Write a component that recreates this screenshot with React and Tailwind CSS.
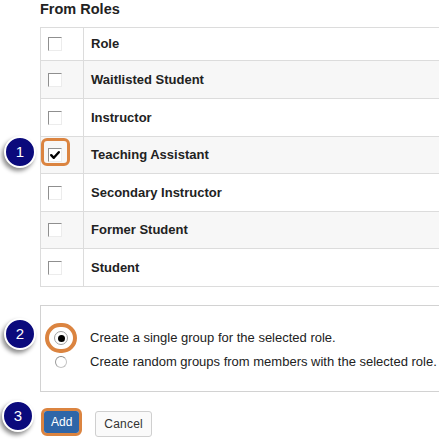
import React from "react";

function Badge({ n, className }) {
  return (
    <div
      className={
        "absolute w-[32px] h-[32px] rounded-full bg-[#0b0a7c] border-2 border-white flex items-center justify-center text-white text-[15px] shadow-[-2px_3px_4px_rgba(0,0,0,0.45)] " +
        className
      }
    >
      {n}
    </div>
  );
}

function Checkbox({ checked }) {
  return (
    <div className="relative w-[14px] h-[14px] bg-white border-t border-l border-[#8f8f8f] border-r border-b border-r-[#ececec] border-b-[#ececec]">
      {checked && (
        <svg viewBox="0 0 14 14" className="absolute left-[-1px] top-[-1px] w-[14px] h-[14px]">
          <path d="M3.2 7.2 L5.8 9.8 L10.8 4.2" fill="none" stroke="#000" strokeWidth="2.4" strokeLinecap="round" strokeLinejoin="round" />
        </svg>
      )}
    </div>
  );
}

const rows = [
  { label: "Role", h: "h-[32px]", bg: "bg-white" },
  { label: "Waitlisted Student", h: "h-[37px]", bg: "bg-[#f7f7f7]" },
  { label: "Instructor", h: "h-[37px]", bg: "bg-white" },
  { label: "Teaching Assistant", h: "h-[36px]", bg: "bg-[#f7f7f7]", checked: true },
  { label: "Secondary Instructor", h: "h-[37px]", bg: "bg-white" },
  { label: "Former Student", h: "h-[36px]", bg: "bg-[#f7f7f7]" },
  { label: "Student", h: "h-[37px]", bg: "bg-white" },
];

export default function App() {
  return (
    <div
      className="relative w-[439px] h-[440px] overflow-hidden bg-white text-[#222]"
      style={{ fontFamily: '"Liberation Sans", Arial, sans-serif' }}
    >
      <div className="pl-[40px] pt-[1px] w-[480px]">
        <div className="text-[14.5px] leading-[16px] font-bold text-[#222]">From Roles</div>

        <div className="mt-[10px] border-t border-l border-[#dcdcdc]">
          {rows.map((r) => (
            <div key={r.label} className={"flex border-b border-[#dcdcdc] " + r.bg}>
              <div className={"w-[43px] shrink-0 flex items-center pl-[7px] border-r border-[#dcdcdc] " + r.h}>
                {r.checked ? (
                  <div className="relative">
                    <div className="absolute left-[-7px] top-[-10px] w-[29px] h-[28px] rounded-[6px] border-[3px] border-[#db8440]"></div>
                    <Checkbox checked />
                  </div>
                ) : (
                  <Checkbox />
                )}
              </div>
              <div className={"flex items-center pl-[7px] text-[13px] font-bold text-[#222] " + r.h}>{r.label}</div>
            </div>
          ))}
        </div>

        <div className="mt-[18px] border-t border-l border-b border-[#d2d2d2] pt-[20px] pb-[17px] pl-[14px] text-[13px] text-[#222]">
          <div className="flex items-center h-[24px]">
            <div className="relative w-[12px] flex justify-center mr-[23px]">
              <div className="absolute left-1/2 top-1/2 -translate-x-1/2 -translate-y-1/2 w-[32px] h-[30px] rounded-full border-[4px] border-[#db8440]"></div>
              <div className="w-[14px] h-[14px] rounded-full border border-[#a0a0a0] bg-white flex items-center justify-center shrink-0">
                <div className="w-[7px] h-[7px] rounded-full bg-black"></div>
              </div>
            </div>
            <span>Create a single group for the selected role.</span>
          </div>
          <div className="flex items-center h-[24px]">
            <div className="w-[12px] flex justify-center mr-[23px]">
              <div className="w-[12px] h-[12px] rounded-full border border-[#c4c4c4] border-t-[#8a8a8a] border-l-[#9a9a9a] bg-white shrink-0"></div>
            </div>
            <span>Create random groups from members with the selected role.</span>
          </div>
        </div>

        <div className="flex items-center mt-[15px] pl-[1px]">
          <div className="rounded-[6px] border-[3px] border-[#db8440]">
            <div className="h-[22px] px-[7px] rounded-[3px] bg-[#2f66a8] text-white text-[12px] flex items-center">Add</div>
          </div>
          <div className="ml-[13px] mt-[4px] h-[26px] px-[8px] rounded-[3px] border border-[#cfcfcf] bg-[#fafafa] text-[12px] text-[#333] flex items-center tracking-[0.2px]">
            Cancel
          </div>
        </div>
      </div>

      <Badge n="1" className="left-[4px] top-[136px]" />
      <Badge n="2" className="left-[4px] top-[318px]" />
      <Badge n="3" className="left-[2px] top-[400px]" />
    </div>
  );
}
